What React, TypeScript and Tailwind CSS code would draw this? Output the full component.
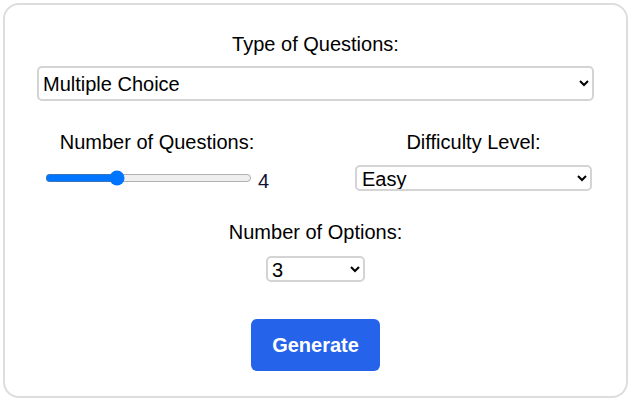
import { useState } from "react";

export default function App() {
  const [type, setType] = useState("Multiple Choice");
  const [count, setCount] = useState(4);
  const [level, setLevel] = useState("Easy");
  const [options, setOptions] = useState("3");

  return (
    <div
      className="bg-white p-[3px] text-black"
      style={{ fontFamily: '"Liberation Sans", Arial, sans-serif' }}
    >
      <div className="flex h-[395px] w-[625px] flex-col items-center rounded-[16px] border-2 border-[#dddddd] px-[32px] pt-[28px]">
        <label className="block text-[20px] leading-[23px]">Type of Questions:</label>
        <select
          value={type}
          onChange={(e) => setType(e.target.value)}
          className="mt-[10px] h-[35px] w-full rounded-[5px] border-2 border-[#d4d4d4] bg-white pl-0 pr-[6px] text-[20px]"
        >
          <option>Multiple Choice</option>
          <option>True or False</option>
          <option>Short Answer</option>
        </select>

        <div className="mt-[30px] flex w-full justify-between">
          <div className="flex w-[240px] flex-col items-center">
            <label className="block text-[20px] leading-[23px]">Number of Questions:</label>
            <div className="mt-[11px] flex h-[26px] w-full items-center pl-[8px]">
              <input
                type="range"
                min={1}
                max={10}
                value={count}
                onChange={(e) => setCount(Number(e.target.value))}
                className="w-[207px] accent-[#0075ff]"
              />
              <span className="ml-[6px] mt-[5px] text-[20px] leading-[22px] text-[#111133]">{count}</span>
            </div>
          </div>
          <div className="mr-[2px] flex w-[237px] flex-col items-center">
            <label className="block text-[20px] leading-[23px]">Difficulty Level:</label>
            <select
              value={level}
              onChange={(e) => setLevel(e.target.value)}
              className="mt-[11px] h-[26px] w-full rounded-[5px] border-2 border-[#d4d4d4] bg-white pl-[1px] pr-[4px] text-[20px]"
            >
              <option>Easy</option>
              <option>Medium</option>
              <option>Hard</option>
            </select>
          </div>
        </div>

        <label className="mt-[30px] block text-[20px] leading-[23px]">Number of Options:</label>
        <select
          value={options}
          onChange={(e) => setOptions(e.target.value)}
          className="mt-[12px] h-[26px] w-[99px] rounded-[5px] border-2 border-[#d4d4d4] bg-white pl-0 pr-[4px] text-[20px]"
        >
          <option>2</option>
          <option>3</option>
          <option>4</option>
          <option>5</option>
        </select>

        <button
          type="button"
          className="mt-[37px] h-[52px] w-[129px] rounded-[6px] bg-[#2563eb] text-[20px] font-bold text-white"
        >
          Generate
        </button>
      </div>
    </div>
  );
}
